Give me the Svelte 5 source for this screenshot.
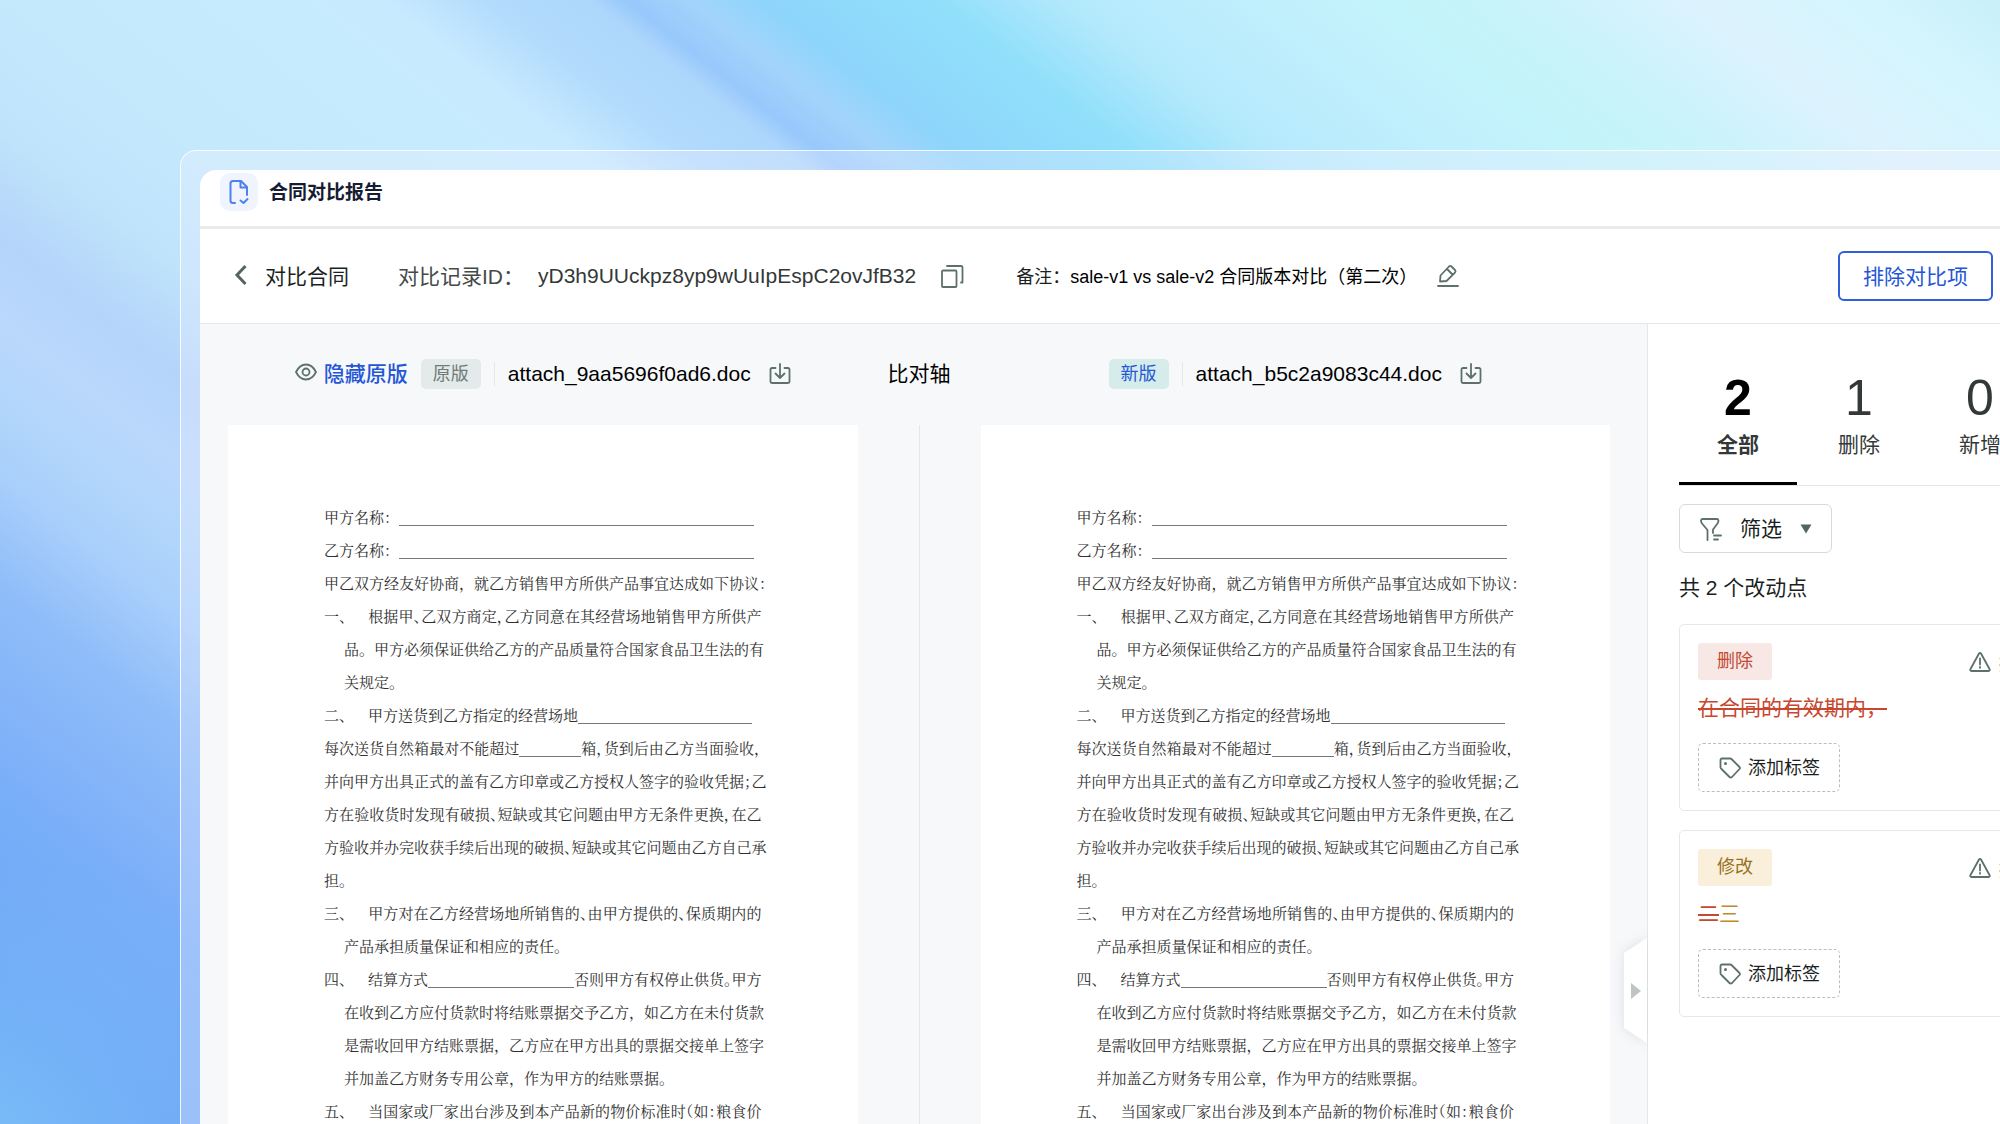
<script lang="ts">
  type Line = {
    mark?: string
    indent?: boolean
    full?: boolean
    tight?: boolean
    parts: (string | number)[]
  }

  // numbers are the widths of the blanks to fill in
  const lines: Line[] = [
    { parts: ['甲方名称：', 355] },
    { parts: ['乙方名称：', 355] },
    { full: true, parts: ['甲乙双方经友好协商，就乙方销售甲方所供产品事宜达成如下协议：'] },
    { mark: '一、', full: true, tight: true, parts: ['根据甲、乙双方商定，乙方同意在其经营场地销售甲方所供产'] },
    { indent: true, full: true, parts: ['品。甲方必须保证供给乙方的产品质量符合国家食品卫生法的有'] },
    { indent: true, parts: ['关规定。'] },
    { mark: '二、', parts: ['甲方送货到乙方指定的经营场地', 174] },
    { full: true, tight: true, parts: ['每次送货自然箱最对不能超过', 62, '箱，货到后由乙方当面验收，'] },
    { full: true, tight: true, parts: ['并向甲方出具正式的盖有乙方印章或乙方授权人签字的验收凭据；乙'] },
    { full: true, tight: true, parts: ['方在验收货时发现有破损、短缺或其它问题由甲方无条件更换，在乙'] },
    { full: true, tight: true, parts: ['方验收并办完收获手续后出现的破损、短缺或其它问题由乙方自己承'] },
    { parts: ['担。'] },
    { mark: '三、', full: true, tight: true, parts: ['甲方对在乙方经营场地所销售的、由甲方提供的、保质期内的'] },
    { indent: true, parts: ['产品承担质量保证和相应的责任。'] },
    { mark: '四、', full: true, tight: true, parts: ['结算方式', 146, '否则甲方有权停止供货。甲方'] },
    { indent: true, full: true, parts: ['在收到乙方应付货款时将结账票据交予乙方，如乙方在未付货款'] },
    { indent: true, full: true, parts: ['是需收回甲方结账票据，乙方应在甲方出具的票据交接单上签字'] },
    { indent: true, parts: ['并加盖乙方财务专用公章，作为甲方的结账票据。'] },
    { mark: '五、', full: true, tight: true, parts: ['当国家或厂家出台涉及到本产品新的物价标准时（如：粮食价'] }
  ]

  const tabs = [
    { key: 'all', count: 2, label: '全部' },
    { key: 'delete', count: 1, label: '删除' },
    { key: 'insert', count: 0, label: '新增' }
  ]

  const changes = [
    { type: 'delete', label: '删除', removed: '在合同的有效期内，', added: '' },
    { type: 'modify', label: '修改', removed: '二', added: '三' }
  ]

  let activeTab = $state('all')
</script>

{#snippet downloadIcon()}
  <svg class="icon" width="22" height="22" viewBox="0 0 22 22" aria-hidden="true">
    <path d="M6.5 5H3a1.5 1.5 0 0 0-1.5 1.5v12A1.5 1.5 0 0 0 3 20h16a1.5 1.5 0 0 0 1.5-1.5v-12A1.5 1.5 0 0 0 19 5h-3.5M11 1v14M6.5 10.5 11 15l4.5-4.5" />
  </svg>
{/snippet}

{#snippet contract()}
  <article class="paper">
    {#each lines as line}
      <p class="line" class:full={line.full} class:tight={line.tight} class:indent={line.indent}>
        {#if line.mark}<span class="mark">{line.mark}</span>{/if}{#each line.parts as part}{#if typeof part === 'number'}<span class="blank" style="width: {part}px"></span>{:else}{part}{/if}{/each}
      </p>
    {/each}
  </article>
{/snippet}

<div class="stage">
  <div class="frame">
    <main class="window">
      <div class="titlebar">
        <span class="app-icon">
          <svg width="24" height="26" viewBox="0 0 24 26" aria-hidden="true">
            <path d="M8 24H6a2.500 2.500 0 0 1-2.500-2.500v-17A2.500 2.500 0 0 1 6 2h8l6 6v8M13.500 2.500V8.500H19.500M13.500 21.500l3 2.500 4-4" />
          </svg>
        </span>
        <h1>合同对比报告</h1>
      </div>

      <header class="header">
        <button class="back" type="button">
          <svg width="14" height="22" viewBox="0 0 14 22" aria-hidden="true"><path d="M11.500 2 3 11l8.500 9" /></svg>
          对比合同
        </button>
        <span class="record-label">对比记录ID：</span>
        <span class="record-id">yD3h9UUckpz8yp9wUuIpEspC2ovJfB32</span>
        <button class="icon-button copy" type="button" aria-label="复制">
          <svg class="icon" width="24" height="24" viewBox="0 0 24 24" aria-hidden="true">
            <path d="M3 6.500h12.500a1 1 0 0 1 1 1V22a1 1 0 0 1-1 1H3a1 1 0 0 1-1-1V7.500a1 1 0 0 1 1-1ZM7 2h14a1.500 1.500 0 0 1 1.500 1.500v15H21" />
          </svg>
        </button>
        <span class="remark">备注：<span class="remark-text">sale-v1 vs sale-v2 合同版本对比（第二次）</span></span>
        <button class="icon-button edit" type="button" aria-label="编辑备注">
          <svg class="icon" width="22" height="24" viewBox="0 0 22 24" aria-hidden="true">
            <path d="M3 17.500 3.500 11.500 12 2.500a1.800 1.800 0 0 1 2.500 0l3.500 3.500a1.800 1.800 0 0 1 0 2.500L9.500 17ZM10.500 5.500l4.500 4.500M1 22h20" />
          </svg>
        </button>
        <button class="exclude" type="button">排除对比项</button>
      </header>

      <div class="body">
        <section class="compare">
          <div class="files">
            <div class="file">
              <button class="toggle" type="button">
                <svg class="icon" width="22" height="20" viewBox="0 0 22 20" aria-hidden="true">
                  <path d="M1 10c2.500-5 6-7.500 10-7.500S18.500 5 21 10c-2.500 5-6 7.500-10 7.500S3.500 15 1 10Z" />
                  <circle cx="11" cy="10" r="3.500" />
                </svg>
                隐藏原版
              </button>
              <span class="version">原版</span>
              <span class="filename">attach_9aa5696f0ad6.doc</span>
              <button class="icon-button" type="button" aria-label="下载原版">{@render downloadIcon()}</button>
            </div>
            <span class="axis-title">比对轴</span>
            <div class="file">
              <span class="version new">新版</span>
              <span class="filename">attach_b5c2a9083c44.doc</span>
              <button class="icon-button" type="button" aria-label="下载新版">{@render downloadIcon()}</button>
            </div>
          </div>
          <div class="papers">
            {@render contract()}
            <div class="axis"></div>
            {@render contract()}
          </div>
        </section>

        <aside class="sidebar">
          <button class="collapse" type="button" aria-label="收起">
            <svg width="44" height="126" viewBox="0 0 44 126" aria-hidden="true">
              <path class="flap" d="M43 10 20 25v75l23 15Z" />
              <path class="arrow" d="M27 55v16l10-8Z" />
            </svg>
          </button>
          <div class="panel">
            <div class="tabs" role="tablist">
              {#each tabs as tab (tab.key)}
                <button
                  class="tab"
                  class:active={activeTab === tab.key}
                  type="button"
                  role="tab"
                  aria-selected={activeTab === tab.key}
                  onclick={() => (activeTab = tab.key)}
                >
                  <span class="count">{tab.count}</span>
                  <span class="tab-label">{tab.label}</span>
                </button>
              {/each}
            </div>

            <button class="filter" type="button">
              <svg class="icon" width="22" height="24" viewBox="0 0 22 24" aria-hidden="true">
                <path d="M7.500 23V13L2 6.500C.5 4.500 1 2 2.500 2H17c1.500 0 2 2.500.500 4.500L13 12.500V16M14 18.500h7M14 22.500h4" />
              </svg>
              <span class="button-text">筛选</span>
              <svg class="caret" width="12" height="10" viewBox="0 0 12 10" aria-hidden="true"><path d="M.5.5h11L6 9.500Z" /></svg>
            </button>

            <p class="total">共 2 个改动点</p>

            {#each changes as change}
              <article class="card">
                <div class="card-head">
                  <span class="kind {change.type}">{change.label}</span>
                  <button class="report" type="button">
                    <svg class="icon" width="22" height="22" viewBox="0 0 22 22" aria-hidden="true">
                      <path d="M10 2.500a1.200 1.200 0 0 1 2 0l8.500 15.500a1.200 1.200 0 0 1-1 2h-17a1.200 1.200 0 0 1-1-2ZM11 7.500v6M11 15.800v1" />
                    </svg>
                    报错
                  </button>
                </div>
                <p class="diff"><del>{change.removed}</del>{#if change.added}<ins>{change.added}</ins>{/if}</p>
                <button class="add-tag" type="button">
                  <svg class="icon" width="22" height="22" viewBox="0 0 22 22" aria-hidden="true">
                    <path d="M1.500 3A1.500 1.500 0 0 1 3 1.500h8a2 2 0 0 1 1.500.500l8 8a1.500 1.500 0 0 1 0 2l-7.500 8a2 2 0 0 1-2.500 0l-8-8a2 2 0 0 1-1-1.500Z" />
                    <circle class="dot" cx="6.500" cy="6.500" r="1.500" />
                  </svg>
                  <span class="button-text">添加标签</span>
                </button>
              </article>
            {/each}
          </div>
        </aside>
      </div>
    </main>
  </div>
</div>

<style>
  :global(body) {
    margin: 0;
    font-family: 'Liberation Sans', 'Noto Sans CJK SC', sans-serif;
    color: #1c1f1f;
  }

  h1,
  p {
    margin: 0;
  }

  button {
    display: inline-flex;
    align-items: center;
    padding: 0;
    border: 0;
    color: inherit;
    background: none;
    font: inherit;
    white-space: nowrap;
    cursor: pointer;
  }

  svg {
    display: block;
    flex: none;
    fill: none;
  }

  .icon {
    stroke: #5d706c;
    stroke-width: 1.8;
    stroke-linecap: round;
    stroke-linejoin: round;
  }

  .stage {
    box-sizing: border-box;
    height: 100vh;
    padding: 150px 0 0 180px;
    overflow: hidden;
    background:
      radial-gradient(circle at 0 100%, rgba(124, 198, 248, 0.5), transparent 260px),
      linear-gradient(
        38deg,
        #74adf7 0%,
        #70a8f6 5%,
        #77aef8 12%,
        #85b4f9 16%,
        #8fbdf9 20%,
        #a8cefb 24%,
        #b2d6fb 27%,
        #bad8fc 30%,
        #b4d4fa 33%,
        #bfe3fb 37%,
        #c4e9fd 42%,
        #c6ebfe 49%,
        #c8eaff 53%,
        #b2dbfc 56%,
        #acd6fb 59%,
        #98c8fc 60%,
        #a2d4fb 62%,
        #8ed5fb 64%,
        #90dffb 69%,
        #b4e9fc 73%,
        #c0effd 78%,
        #c4f4fa 83%,
        #ccf3fc 87%,
        #dcf2fd 91%,
        #d4f5fd 96%,
        #c8f0fa 100%
      );
  }

  .frame {
    box-sizing: border-box;
    height: 100%;
    padding: 19px 0 0 19px;
    border: solid rgba(255, 255, 255, 0.85);
    border-width: 1px 0 0 1px;
    border-radius: 16px 0 0 0;
    background: rgba(240, 240, 255, 0.32);
  }

  .window {
    display: flex;
    height: 100%;
    flex-direction: column;
    overflow: hidden;
    border-radius: 16px 0 0 0;
    background: #ffffff;
  }

  .titlebar {
    display: flex;
    height: 53px;
    flex: none;
    align-items: flex-start;
    gap: 11px;
    padding: 3px 20px 0;
    border-bottom: 3px solid #e8eceb;
  }

  .app-icon {
    display: grid;
    width: 38px;
    height: 38px;
    place-items: center;
    border-radius: 10px;
    background: #eff4fe;
  }

  .app-icon path {
    stroke: #4e80ee;
    stroke-width: 2;
    stroke-linecap: round;
    stroke-linejoin: round;
  }

  h1 {
    color: #161c33;
    font-size: 19px;
    font-weight: 700;
    line-height: 40px;
  }

  .header {
    display: flex;
    height: 94px;
    flex: none;
    align-items: center;
    padding: 0 7px 0 34px;
    border-bottom: 1px solid #e4e8e8;
    font-size: 21px;
    white-space: nowrap;
  }

  .back,
  .record-label,
  .remark,
  .toggle,
  .axis-title,
  .button-text {
    padding-bottom: 3px;
  }

  .back {
    gap: 17px;
  }

  .back path {
    stroke: #55645f;
    stroke-width: 3;
  }

  .record-label {
    margin-left: 49px;
    color: #444a49;
  }

  .record-id {
    margin-left: 14px;
    color: #333838;
  }

  .copy {
    margin-left: 24px;
  }

  .remark {
    margin-left: 52px;
    font-size: 18px;
  }

  .remark-text {
    color: #000000;
  }

  .edit {
    margin-left: 20px;
  }

  .exclude {
    box-sizing: border-box;
    height: 50px;
    margin-left: auto;
    padding: 0 23px 3px;
    border: 2px solid #2f60da;
    border-radius: 6px;
    color: #2457d6;
  }

  .body {
    display: flex;
    min-height: 0;
    flex: 1;
  }

  .compare {
    display: flex;
    min-width: 0;
    flex: 1;
    flex-direction: column;
    background: #f7f8fa;
  }

  .files,
  .papers {
    display: grid;
    grid-template-columns: 1fr 123px 1fr;
    padding: 0 37px 0 28px;
  }

  .files {
    box-sizing: border-box;
    height: 101px;
    flex: none;
    align-items: center;
    padding-bottom: 2px;
    color: #000000;
    font-size: 21px;
    white-space: nowrap;
  }

  .file {
    display: flex;
    align-items: center;
    justify-content: center;
  }

  .toggle {
    gap: 7px;
    margin-right: 13px;
    color: #2457d6;
    font-weight: 500;
  }

  .version {
    padding: 0 12px;
    border-radius: 5px;
    color: #6f7b79;
    background: #e4eae9;
    font-size: 18px;
    line-height: 30px;
  }

  .version.new {
    color: #2457d6;
    background: #d5ecea;
  }

  .filename {
    margin: 0 18px 0 13px;
    padding-left: 13px;
    border-left: 1px solid #e4e8e8;
  }

  .axis-title {
    text-align: center;
  }

  .papers {
    min-height: 0;
    flex: 1;
  }

  .axis {
    width: 1px;
    justify-self: center;
    background: #e2e7e8;
  }

  .paper {
    padding: 75px 96px 0;
    overflow: hidden;
    color: #303030;
    background: #ffffff;
    font-family: 'Noto Serif CJK SC', 'Songti SC', SimSun, 'Noto Sans CJK SC', serif;
    font-size: 15px;
    line-height: 33px;
  }

  .line {
    height: 33px;
    white-space: nowrap;
  }

  .full {
    text-align: justify;
    text-align-last: justify;
  }

  .tight {
    font-feature-settings: 'halt';
  }

  .indent {
    padding-left: 20px;
  }

  .mark {
    display: inline-block;
    width: 44px;
    text-align-last: left;
  }

  .blank {
    display: inline-block;
    height: 1px;
    background: #777777;
    vertical-align: -3px;
  }

  .sidebar {
    position: relative;
    width: 353px;
    flex: none;
    box-sizing: border-box;
    border-left: 1px solid #e4e8e8;
  }

  .collapse {
    position: absolute;
    bottom: 70px;
    left: -44px;
  }

  .flap {
    fill: #ffffff;
    filter: drop-shadow(0 0 6px rgba(60, 70, 90, 0.14));
  }

  .arrow {
    fill: #bec5c3;
  }

  .panel {
    height: 100%;
    padding-left: 31px;
    overflow: hidden;
  }

  .tabs {
    display: flex;
    width: 486px;
    gap: 3px;
    border-bottom: 1px solid #e0e5e5;
  }

  .tab {
    width: 118px;
    height: 161px;
    box-sizing: border-box;
    flex: none;
    flex-direction: column;
    padding-top: 43px;
    border-bottom: 3px solid transparent;
    color: #333838;
  }

  .tab.active {
    border-color: #000000;
    font-weight: 700;
  }

  .count {
    font-size: 50px;
    line-height: 62px;
  }

  .active .count {
    color: #000000;
  }

  .tab-label {
    font-size: 21px;
    line-height: 32px;
  }

  .filter {
    height: 49px;
    box-sizing: border-box;
    gap: 18px;
    margin-top: 18px;
    padding: 0 19px 0 20px;
    border: 1px solid #d5dbda;
    border-radius: 6px;
    font-size: 21px;
  }

  .caret {
    fill: #526561;
  }

  .total {
    margin-top: 20px;
    font-size: 21px;
    line-height: 30px;
  }

  .card {
    width: 450px;
    margin-top: 19px;
    padding: 18px;
    border: 1px solid #e2e9e8;
    border-radius: 5px;
  }

  .total + .card {
    margin-top: 21px;
  }

  .card-head {
    display: flex;
    align-items: center;
    gap: 197px;
  }

  .kind {
    padding: 0 19px;
    border-radius: 3px;
    font-size: 18px;
    line-height: 37px;
  }

  .kind.delete {
    color: #c4472f;
    background: #f7e8e6;
  }

  .kind.modify {
    color: #98701f;
    background: #f9efda;
  }

  .report {
    gap: 8px;
    font-size: 18px;
  }

  .diff {
    margin: 11px 0 18px;
    font-size: 21px;
    line-height: 34px;
  }

  del {
    color: #c8472f;
  }

  ins {
    color: #c08a2c;
    text-decoration: none;
  }

  .add-tag {
    height: 49px;
    box-sizing: border-box;
    gap: 7px;
    padding: 0 19px 0 20px;
    border: 1px dashed #b9bfbe;
    border-radius: 5px;
    font-size: 18px;
  }

  .dot {
    fill: #5d706c;
    stroke: none;
  }
</style>
